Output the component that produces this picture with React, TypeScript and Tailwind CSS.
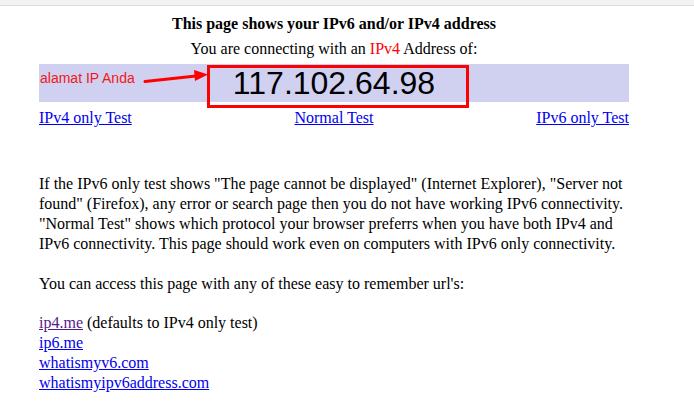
import React from "react";

export default function App() {
  const serif = { fontFamily: '"Liberation Serif", "Times New Roman", serif' };
  return (
    <div className="relative w-[694px] h-[402px] bg-white overflow-hidden text-black" style={serif}>
      <div className="h-[6px] bg-[#f2f2f2] border-b border-[#dedede]" />
      <div className="ml-[39px] w-[590px] text-[16px] leading-[20px]">
        <div className="mt-[8px] text-center font-bold">This page shows your IPv6 and/or IPv4 address</div>
        <div className="mt-[5px] text-center">
          You are connecting with an <span className="text-[#ff0000]">IPv4</span> Address of:
        </div>
        <div className="mt-[5px] h-[38px] bg-[#d0d0f0] flex items-center justify-center">
          <span className="text-[32px] leading-none text-black" style={{ fontFamily: '"Liberation Sans", Arial, sans-serif' }}>
            117.102.64.98
          </span>
        </div>
        <div className="mt-[6px] flex justify-between">
          <a href="#" className="text-[#0000ee] underline">IPv4 only Test</a>
          <a href="#" className="text-[#0000ee] underline">Normal Test</a>
          <a href="#" className="text-[#0000ee] underline">IPv6 only Test</a>
        </div>
        <p className="mt-[46px]">
          If the IPv6 only test shows "The page cannot be displayed" (Internet Explorer), "Server not found" (Firefox), any error or search page then you do not have working IPv6 connectivity. "Normal Test" shows which protocol your browser preferrs when you have both IPv4 and IPv6 connectivity. This page should work even on computers with IPv6 only connectivity.
        </p>
        <p className="mt-[20px]">You can access this page with any of these easy to remember url's:</p>
        <div className="mt-[19px] flex flex-col">
          <div>
            <a href="#" className="text-[#551a8b] underline">ip4.me</a> (defaults to IPv4 only test)
          </div>
          <div><a href="#" className="text-[#0000ee] underline">ip6.me</a></div>
          <div><a href="#" className="text-[#0000ee] underline">whatismyv6.com</a></div>
          <div><a href="#" className="text-[#0000ee] underline">whatismyipv6address.com</a></div>
        </div>
      </div>

      {/* annotations */}
      <div
        className="absolute left-[40px] top-[69px] text-[14px] leading-[18px] text-[#f01818]"
        style={{ fontFamily: '"Liberation Sans", Arial, sans-serif' }}
      >
        alamat IP Anda
      </div>
      <svg className="absolute left-[140px] top-[66px]" width="72" height="22" viewBox="0 0 72 22">
        <line x1="5" y1="15.5" x2="56" y2="10" stroke="#ff0000" strokeWidth="3" strokeLinecap="round" />
        <polygon points="54,4 68,8.5 55,15" fill="#ff0000" />
      </svg>
      <div className="absolute left-[207px] top-[65px] w-[262px] h-[43px] border-[3px] border-[#ff0000]" />
    </div>
  );
}
